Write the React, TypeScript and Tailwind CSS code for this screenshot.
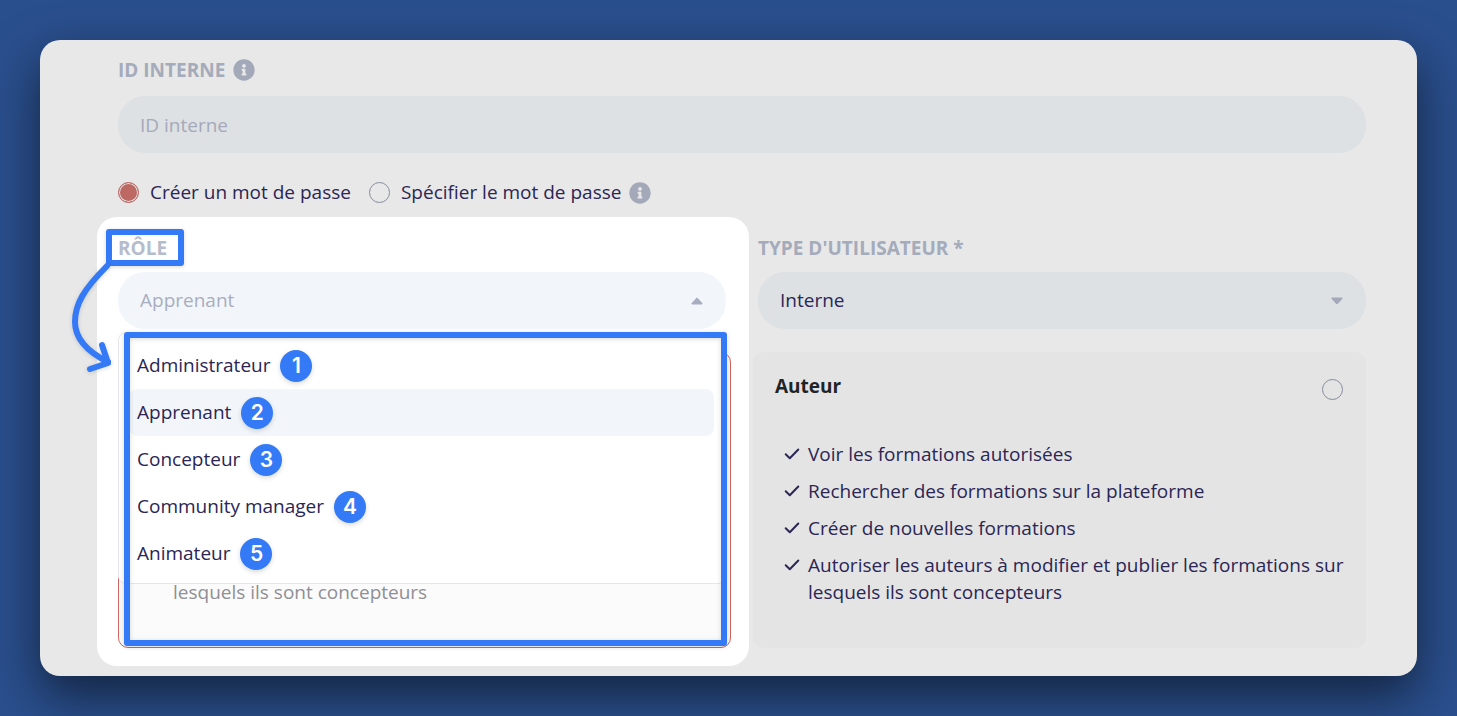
import { useState } from "react"
import { FaInfoCircle } from "react-icons/fa"
import clsx from "clsx"

const ROLES = ["Administrateur", "Apprenant", "Concepteur", "Community manager", "Animateur"]

const AUTHOR_RIGHTS = [
  "Voir les formations autorisées",
  "Rechercher des formations sur la plateforme",
  "Créer de nouvelles formations",
  "Autoriser les auteurs à modifier et publier les formations sur lesquels ils sont concepteurs",
]

function InfoButton({ label }: { label: string }) {
  return (
    <button type="button" aria-label={label} className="text-[#a4a9b9]">
      <FaInfoCircle size={22} aria-hidden="true" />
    </button>
  )
}

function Caret({ up = false }: { up?: boolean }) {
  return (
    <svg
      width="12"
      height="8"
      viewBox="0 0 12 8"
      fill="currentColor"
      className={clsx("shrink-0", up && "rotate-180")}
      aria-hidden="true"
    >
      <path d="M1.3 0.5H10.7C11.5 0.5 11.8 1.4 11.3 2L6.9 6.8C6.4 7.3 5.6 7.3 5.1 6.8L0.7 2C0.2 1.4 0.5 0.5 1.3 0.5Z" />
    </svg>
  )
}

function Check() {
  return (
    <svg
      width="16"
      height="27"
      viewBox="0 0 16 27"
      fill="none"
      stroke="currentColor"
      strokeWidth="2"
      strokeLinecap="round"
      strokeLinejoin="round"
      className="shrink-0"
      aria-hidden="true"
    >
      <path d="M1.7 13.2L5.8 17.2L14.3 8.5" />
    </svg>
  )
}

interface RadioProps {
  name: string
  label: string
  checked: boolean
  onChange: () => void
  hideLabel?: boolean
}

function Radio({ name, label, checked, onChange, hideLabel = false }: RadioProps) {
  return (
    <label className="flex items-center gap-[11px]">
      <input
        type="radio"
        name={name}
        aria-label={hideLabel ? label : undefined}
        checked={checked}
        onChange={onChange}
        className="size-[21px] shrink-0 appearance-none rounded-full border border-[#868da0] checked:border-[#be6863] checked:bg-[#be6863] checked:shadow-[inset_0_0_0_1px_#e8e8e8]"
      />
      {!hideLabel && label}
    </label>
  )
}

/** Role select, lit up and annotated for the help guide */
function RolePanel() {
  const [open, setOpen] = useState(true)
  const [role, setRole] = useState("Apprenant")

  return (
    <section className="relative -ml-[21px] -mr-[23px] flex flex-col rounded-[20px] bg-white pt-[19px] pr-[23px] pb-[18px] pl-[21px]">
      <span id="role-label" className="mb-3 h-6 leading-6 font-bold text-[#b5bccb]">
        RÔLE
      </span>
      <button
        type="button"
        aria-labelledby="role-label"
        aria-haspopup="listbox"
        aria-expanded={open}
        onClick={() => setOpen(!open)}
        className="flex h-[57px] items-center justify-between rounded-[27px] bg-[#f2f6fb] pr-[23px] pl-[22px] text-[#a9adc0]"
      >
        {role}
        <Caret up={open} />
      </button>

      <div className="mt-[23px] -mr-[5px] flex flex-1 flex-col justify-end rounded-[10px] border border-[#cf6561] bg-[#fbfbfb] pr-[22px] pb-[41px] pl-[54px] text-[#8f8f95]">
        <p>lesquels ils sont concepteurs</p>
      </div>

      {open && (
        <ul
          role="listbox"
          aria-labelledby="role-label"
          className="absolute top-[115px] right-[23px] left-[21px] rounded-[8px] border border-[#e4e6ec] bg-white pt-[9px] pr-[11px] pb-[6px] pl-[10px] font-medium"
        >
          {ROLES.map((item, i) => (
            <li
              key={item}
              role="option"
              aria-selected={item === role}
              onClick={() => setRole(item)}
              className={clsx(
                "flex h-[47px] items-center gap-[10px] rounded-[8px] px-2",
                item === role && "bg-[#f2f6fb]"
              )}
            >
              {item}
              <span className="flex size-8 items-center justify-center rounded-full bg-[#347af6] font-[Inter,sans-serif] text-[21px] font-semibold text-white shadow-[0_2px_5px_rgba(0,0,0,0.15)]">
                {i + 1}
              </span>
            </li>
          ))}
        </ul>
      )}

      {/* Annotations */}
      <div className="pointer-events-none absolute top-3 left-[9px] h-[37px] w-[78px] rounded-[3px] border-[6px] border-[#347af6] shadow-[0_1px_4px_rgba(0,0,0,0.15)]" />
      <div className="pointer-events-none absolute top-[115px] right-[22px] bottom-[20px] left-[27px] rounded-[3px] border-[6px] border-[#347af6] shadow-[0_1px_5px_rgba(0,0,0,0.15),inset_0_1px_5px_rgba(0,0,0,0.15)]" />
      <svg
        width="50"
        height="114"
        viewBox="68 262 50 114"
        fill="none"
        stroke="#347af6"
        strokeWidth="6"
        strokeLinecap="round"
        strokeLinejoin="round"
        className="pointer-events-none absolute top-[45px] -left-[29px] drop-shadow-[0_1px_2px_rgba(0,0,0,0.15)]"
        aria-hidden="true"
      >
        <path d="M107 266C84 289 75 304 75 322C75 337 86 351 108 362" />
        <path d="M102 345L108 363L90 369" />
      </svg>
    </section>
  )
}

function UserTypeColumn() {
  const [author, setAuthor] = useState(false)

  return (
    <section className="flex flex-col pt-[19px] pb-[18px]">
      <label htmlFor="user-type" className="mb-3 h-6 leading-6 font-bold text-[#a4abba]">
        TYPE D'UTILISATEUR *
      </label>
      <div className="grid items-center text-[#a4a9b9]">
        <select
          id="user-type"
          className="col-start-1 row-start-1 h-[57px] w-full appearance-none rounded-[27px] bg-[#dde1e4] px-[22px] text-[#2b2654]"
        >
          <option>Interne</option>
          <option>Externe</option>
        </select>
        <span className="pointer-events-none col-start-1 row-start-1 mr-[23px] justify-self-end">
          <Caret />
        </span>
      </div>

      <div className="mt-[23px] -ml-[5px] flex-1 rounded-[10px] bg-[#e4e4e4] pt-[21px] pb-[42px] pl-[22px]">
        <div className="mb-9 flex h-8 items-center justify-between pr-[23px]">
          <h2 className="self-start font-bold text-[#1f2427]">Auteur</h2>
          <Radio name="profile" label="Auteur" hideLabel checked={author} onChange={() => setAuthor(true)} />
        </div>
        <ul className="flex flex-col gap-[10px] pr-3 pl-[9px]">
          {AUTHOR_RIGHTS.map((right) => (
            <li key={right} className="flex gap-2">
              <Check />
              {right}
            </li>
          ))}
        </ul>
      </div>
    </section>
  )
}

export default function App() {
  const [passwordMode, setPasswordMode] = useState<"create" | "specify">("create")

  return (
    <div className="min-h-screen bg-[#2a4f8d] p-10 font-['Open_Sans',sans-serif] text-[19px] leading-[27px] text-[#2b2654]">
      <main className="rounded-[20px] bg-[#e8e8e8] pt-[18px] pr-[51px] pb-[10px] pl-[78px] shadow-[0_20px_50px_rgba(0,0,0,0.55)]">
        <div className="mb-[14px] flex h-6 items-center gap-2">
          <label htmlFor="internal-id" className="leading-6 font-bold text-[#a4abba]">
            ID INTERNE
          </label>
          <InfoButton label="Aide sur l'ID interne" />
        </div>
        <input
          id="internal-id"
          type="text"
          placeholder="ID interne"
          className="block h-[57px] w-full rounded-[27px] bg-[#dde1e4] px-[22px] placeholder:text-[#a5a9ba]"
        />

        <div className="mt-[26px] mb-[11px] flex items-center gap-2">
          <div className="mr-[10px]">
            <Radio
              name="password"
              label="Créer un mot de passe"
              checked={passwordMode === "create"}
              onChange={() => setPasswordMode("create")}
            />
          </div>
          <Radio
            name="password"
            label="Spécifier le mot de passe"
            checked={passwordMode === "specify"}
            onChange={() => setPasswordMode("specify")}
          />
          <InfoButton label="Aide sur le mot de passe" />
        </div>

        <div className="grid grid-cols-2 gap-8">
          <RolePanel />
          <UserTypeColumn />
        </div>
      </main>
    </div>
  )
}
